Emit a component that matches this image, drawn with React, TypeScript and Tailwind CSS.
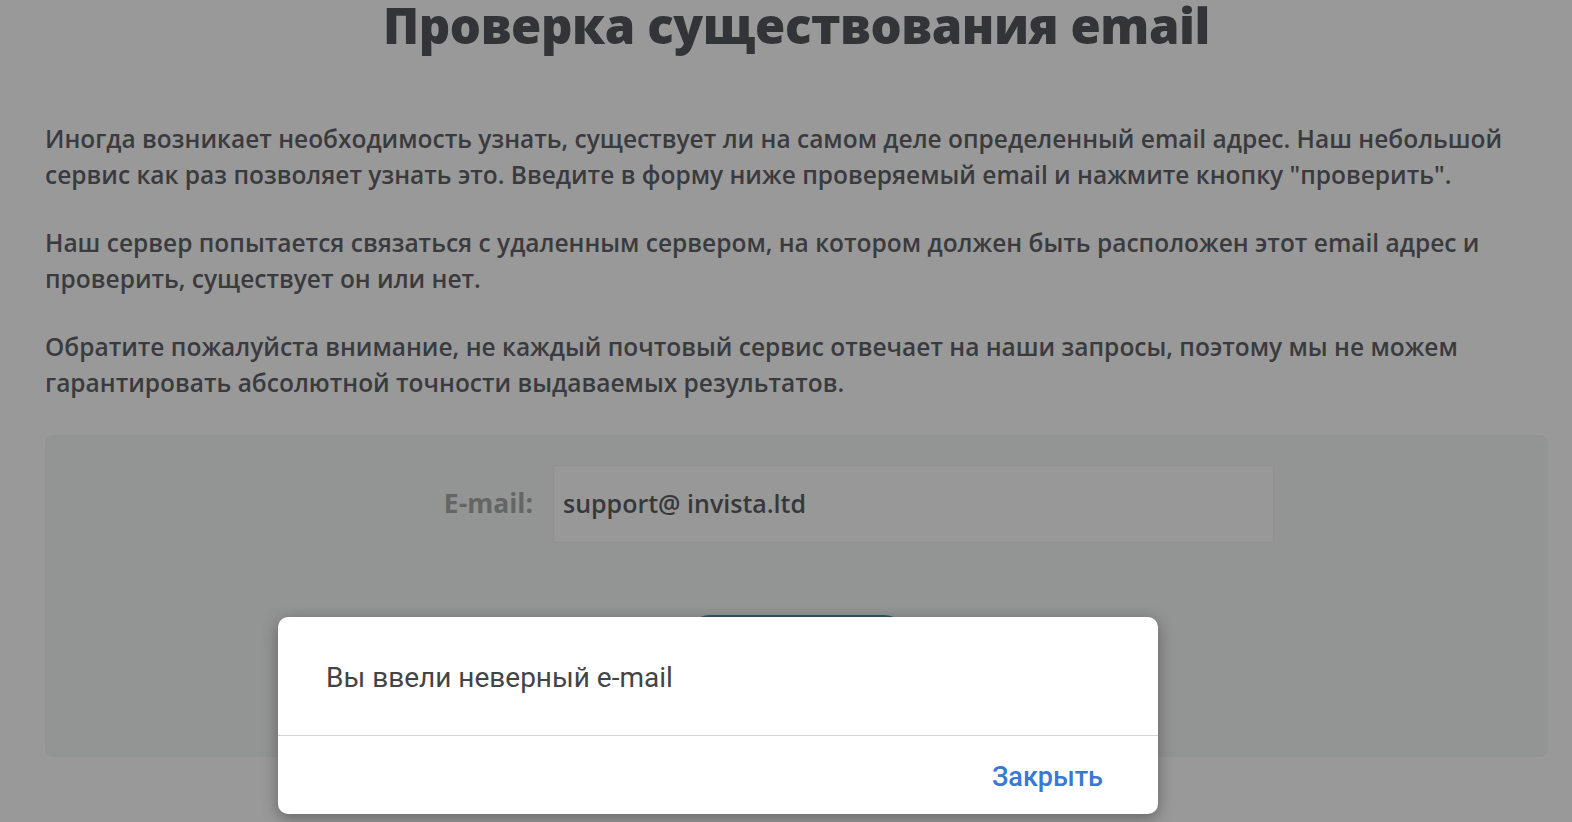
export default function App() {
  return (
    <div className="relative min-h-screen h-[822px] overflow-hidden bg-[#999999] font-['Open_Sans',sans-serif]">
      <div className="pl-[45px] pr-[24px]">
        {/* Title */}
        <h1 className="-mt-[3px] text-center text-[49px] leading-[56px] font-extrabold text-[#333438] tracking-[-0.4px] font-['Open_Sans',sans-serif]">
          Проверка существования email
        </h1>

        {/* Description */}
        <div className="mt-[68px] space-y-[32px] text-[24.5px] leading-[36px] font-semibold text-[#3a3b3e]">
          <p>
            Иногда возникает необходимость узнать, существует ли на самом деле определенный email адрес. Наш
            небольшой сервис как раз позволяет узнать это. Введите в форму ниже проверяемый email и нажмите кнопку
            "проверить".
          </p>
          <p>
            Наш сервер попытается связаться с удаленным сервером, на котором должен быть расположен этот email адрес и
            проверить, существует он или нет.
          </p>
          <p>
            Обратите пожалуйста внимание, не каждый почтовый сервис отвечает на наши запросы, поэтому мы не можем
            гарантировать абсолютной точности выдаваемых результатов.
          </p>
        </div>

        {/* Form panel */}
        <div className="mt-[34px] h-[322px] rounded-lg bg-[#939594] pt-[30px]">
          <div className="flex items-center">
            <label className="w-[508px] pr-[20px] text-right text-[26.5px] font-bold text-[#646565]">E-mail:</label>
            <div className="flex h-[78px] w-[721px] items-center border border-[#8f908f] bg-[#989898] px-[9px] text-[25px] font-semibold text-[#37383b]">
              support@ invista.ltd
            </div>
          </div>
          <div className="mt-[72px] flex justify-center">
            <button className="h-[60px] w-[222px] rounded-[24px] bg-[#2f5562] text-white">Проверить</button>
          </div>
        </div>
      </div>

      {/* Alert dialog */}
      <div className="absolute left-[278px] top-[617px] w-[880px] overflow-hidden rounded-[10px] bg-white shadow-[0_4px_16px_rgba(0,0,0,0.35)] font-['Roboto',sans-serif]">
        <div className="flex h-[118px] items-center px-[48px] pt-[4px] text-[28px] text-[#444444]">Вы ввели неверный e-mail</div>
        <div className="h-px bg-[#d4d4d4]" />
        <div className="flex h-[78px] items-center justify-end pr-[55px] pt-[4px]">
          <button className="text-[27px] font-medium text-[#3a78d6]">Закрыть</button>
        </div>
      </div>
    </div>
  )
}
